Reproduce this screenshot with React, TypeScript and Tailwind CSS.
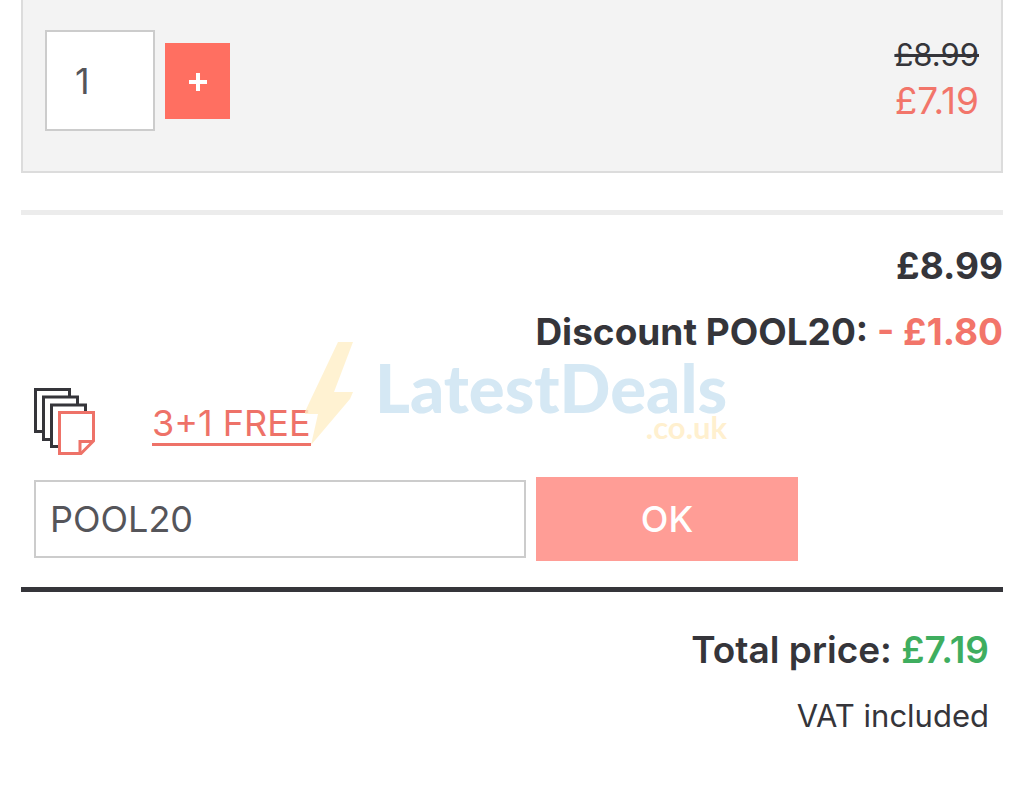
import { useState } from "react";

function StackIcon() {
  return (
    <svg width="61" height="67" viewBox="0 0 61 67" fill="none" strokeWidth="3" aria-hidden="true">
      <g stroke="#35353a">
        <path d="M8 43.5H1.5V1.5H35.5V8" />
        <path d="M16 51.5H9.5V9H43.5V16" />
        <path d="M24 58.5H17.5V17H51.5V24" />
      </g>
      <g stroke="#ee7268">
        <path d="M25.5 24.5H59.5V53L47 65.5H25.5Z" />
        <path d="M46 65V53.5H59" />
      </g>
    </svg>
  );
}

function Watermark() {
  return (
    <div className="pointer-events-none absolute left-[284px] top-[126px] flex font-['Lato',sans-serif]">
      <svg width="70" height="104" viewBox="0 0 70 104" className="opacity-80" aria-hidden="true">
        <path d="M33 1H48L29 51H48L45 58L6 104L13 73H-1L5 60Z" fill="#fff0c8" />
      </svg>
      <div className="flex flex-col items-end">
        <span className="mt-[18px] text-[67px] font-black leading-[56px] text-[#d5e8f4]">LatestDeals</span>
        <span className="text-[31px] font-bold leading-[24px] text-[#fff0cf]">.co.uk</span>
      </div>
    </div>
  );
}

export default function App() {
  const [quantity, setQuantity] = useState("1");
  const [code, setCode] = useState("POOL20");

  return (
    <main className="bg-white px-[21px] font-['Inter',sans-serif] text-[36px] leading-[46px] text-[#35353a]">
      <section className="flex items-start justify-between border-2 border-t-0 border-[#dcdcdc] bg-[#f3f3f3] px-[22px] pt-[30px] pb-10">
        <div className="flex items-center gap-[10px]">
          <input
            type="text"
            inputMode="numeric"
            aria-label="Quantity"
            value={quantity}
            onChange={(e) => setQuantity(e.target.value)}
            className="h-[101px] w-[110px] border-2 border-[#cccccc] bg-white px-7 text-[#55555a]"
          />
          <button
            type="button"
            aria-label="Add one"
            onClick={() => setQuantity(String(Number(quantity) + 1))}
            className="flex h-[76px] w-[65px] items-center justify-center bg-[#ff6f61] text-white"
          >
            <svg width="20" height="20" viewBox="0 0 20 20" stroke="currentColor" strokeWidth="4" aria-hidden="true">
              <path d="M10 2V20M1 11H19" />
            </svg>
          </button>
        </div>
        <div className="flex flex-col items-end pt-[2px]">
          <del className="text-[31px]">£8.99</del>
          <span className="text-[37px] text-[#f2756a]">£7.19</span>
        </div>
      </section>

      <section className="relative mt-[37px] border-t-5 border-[#ececec] pt-[18px]">
        <div className="text-right text-[37px] font-bold leading-[66px]">
          <p>£8.99</p>
          <p>
            Discount POOL20: <span className="text-[#f2756a]">- £1.80</span>
          </p>
        </div>

        <div className="mt-[23px] flex items-center gap-[57px] px-[13px]">
          <StackIcon />
          <a href="#promo" className="border-b-3 border-[#ee7268] pt-[6px] leading-[40px] text-[#ee7268]">
            3+1 FREE
          </a>
        </div>

        <form
          onSubmit={(e) => e.preventDefault()}
          className="mt-[22px] flex items-center gap-[10px] pl-[13px]"
        >
          <input
            type="text"
            aria-label="Discount code"
            value={code}
            onChange={(e) => setCode(e.target.value)}
            className="h-[78px] w-[492px] border-2 border-[#cccccc] bg-white px-[14px] text-[#55555a]"
          />
          <button type="submit" className="h-[84px] w-[262px] bg-[#ff9d96] font-medium text-white">
            OK
          </button>
        </form>
        <Watermark />
      </section>

      <section className="mt-[26px] border-t-5 border-[#35353a] px-[14px] pt-[25px] text-right leading-[66px]">
        <p className="text-[37px] font-semibold">
          Total price: <span className="text-[#3fae5f]">£7.19</span>
        </p>
        <p className="text-[31px]">VAT included</p>
      </section>
    </main>
  );
}
